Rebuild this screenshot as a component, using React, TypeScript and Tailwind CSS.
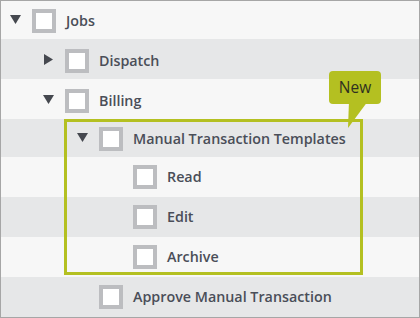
import React from "react";

type Row = {
  label: string;
  pl: string;
  pt: string;
  h: string;
  bg: string;
  exp: "down" | "right" | null;
};

const rows: Row[] = [
  { label: "Jobs", pl: "pl-[8px]", pt: "pt-[2px]", h: "h-[38px]", bg: "bg-[#f7f7f7]", exp: "down" },
  { label: "Dispatch", pl: "pl-[41px]", pt: "pt-[4px]", h: "h-[40px]", bg: "bg-[#e6e7e8]", exp: "right" },
  { label: "Billing", pl: "pl-[41px]", pt: "pt-[4px]", h: "h-[40px]", bg: "bg-[#f7f7f7]", exp: "down" },
  { label: "Manual Transaction Templates", pl: "pl-[75px]", pt: "pt-[2px]", h: "h-[38px]", bg: "bg-[#e6e7e8]", exp: "down" },
  { label: "Read", pl: "pl-[109px]", pt: "pt-0", h: "h-[40px]", bg: "bg-[#f7f7f7]", exp: null },
  { label: "Edit", pl: "pl-[109px]", pt: "pt-0", h: "h-[40px]", bg: "bg-[#e6e7e8]", exp: null },
  { label: "Archive", pl: "pl-[109px]", pt: "pt-0", h: "h-[40px]", bg: "bg-[#f7f7f7]", exp: null },
  { label: "Approve Manual Transaction", pl: "pl-[75px]", pt: "pt-0", h: "h-[40px]", bg: "bg-[#e6e7e8]", exp: null },
];

function Expander({ dir }: { dir: "down" | "right" | null }) {
  return (
    <div className="w-[23px] h-full flex items-center">
      {dir === "down" && (
        <svg width="11" height="9" viewBox="0 0 11 9" className="ml-[1px] -mt-[4px]">
          <polygon points="0,0 11,0 5.5,9" fill="#45484f" />
        </svg>
      )}
      {dir === "right" && (
        <svg width="9" height="11" viewBox="0 0 9 11" className="ml-[2px] -mt-[4px]">
          <polygon points="0,0 9,5.5 0,11" fill="#45484f" />
        </svg>
      )}
    </div>
  );
}

export default function App() {
  return (
    <div
      className="relative w-[420px] h-[318px] border border-[#a6a6a6] overflow-hidden bg-[#f7f7f7]"
      style={{ fontFamily: '"Open Sans", "Liberation Sans", sans-serif' }}
    >
      {rows.map((r, i) => (
        <div key={i} className={`flex items-stretch ${r.h} ${r.bg} ${r.pl} ${r.pt}`}>
          <Expander dir={r.exp} />
          <div className="flex items-center">
            <div className="w-[24px] h-[24px] border-[4px] border-[#bcbdc0] bg-white" />
            <span className="ml-[10px] text-[14.3px] font-semibold text-[#4a4e58] leading-none">
              {r.label}
            </span>
          </div>
        </div>
      ))}

      {/* highlight frame */}
      <div className="absolute left-[63px] top-[118px] w-[299px] h-[156px] border-[3px] border-[#b4c021] pointer-events-none" />

      {/* pointer */}
      <svg
        className="absolute left-[345px] top-[100px]"
        width="24"
        height="28"
        viewBox="0 0 24 28"
      >
        <polygon points="3,0 22,0 2,27" fill="#b4c021" />
      </svg>

      {/* badge */}
      <div className="absolute left-[328px] top-[70px] w-[52px] h-[33px] rounded-[4px] bg-[#b4c021] flex items-center justify-center">
        <span className="text-[15.5px] text-[#2f3020] leading-none">New</span>
      </div>
    </div>
  );
}
